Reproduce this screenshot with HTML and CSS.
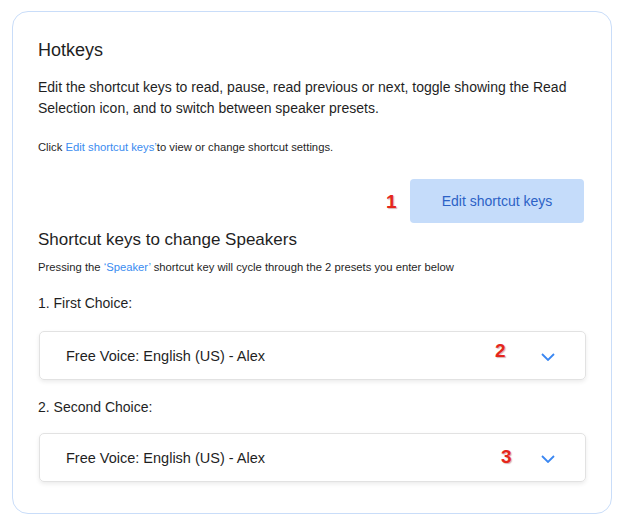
FILE: index.html
```html
<!DOCTYPE html>
<html lang="en">
<head>
<meta charset="UTF-8">
<title>Hotkeys</title>
<link rel="stylesheet" href="styles.css">
</head>
<body>
<div class="card">
  <!-- Hotkeys intro -->
  <h2 class="card-title">Hotkeys</h2>
  <p class="intro">Edit the shortcut keys to read, pause, read previous or next, toggle showing the Read Selection icon, and to switch between speaker presets.</p>
  <p class="note">Click <a class="link" href="#">Edit shortcut keys’</a>to view or change shortcut settings.</p>

  <div class="button-row">
    <button class="edit-button">
      <span class="marker marker-1">1</span>
      Edit shortcut keys
    </button>
  </div>

  <!-- Speaker presets -->
  <h3 class="section-title">Shortcut keys to change Speakers</h3>
  <p class="note note-tight">Pressing the <span class="link">‘Speaker’</span> shortcut key will cycle through the 2 presets you enter below</p>

  <div class="choice-label label-first">1. First Choice:</div>
  <div class="voice-select">
    <span>Free Voice: English (US) - Alex</span>
    <span class="marker marker-2">2</span>
    <svg class="chevron" width="14" height="8" viewBox="0 0 14 8"><path d="M1 1 L7 7 L13 1" fill="none" stroke="#3a87f2" stroke-width="1.8"/></svg>
  </div>

  <div class="choice-label">2. Second Choice:</div>
  <div class="voice-select select-last">
    <span>Free Voice: English (US) - Alex</span>
    <span class="marker marker-3">3</span>
    <svg class="chevron" width="14" height="8" viewBox="0 0 14 8"><path d="M1 1 L7 7 L13 1" fill="none" stroke="#3a87f2" stroke-width="1.8"/></svg>
  </div>
</div>
</body>
</html>
```

FILE: styles.css
```css
body {
    font-family: 'Liberation Sans', Arial, sans-serif;
    margin: 0;
    padding: 11px 12px;
    background-color: #ffffff;
    color: #1f1f1f;
}

.card {
    padding: 27px 25px 31px 25px;
    border: 1px solid #c9ddf9;
    border-radius: 16px;
    background-color: #ffffff;
}

.card-title {
    margin: 0;
    font-size: 18px;
    font-weight: 400;
    line-height: 22px;
}

.intro {
    margin: 16px 0 0 0;
    font-size: 14px;
    line-height: 21px;
}

.note {
    margin: 20px 0 0 0;
    font-size: 11.25px;
    line-height: 16px;
}

.note-tight {
    margin-top: 9px;
}

.link {
    color: #3a8cf0;
    text-decoration: none;
}

/* Edit button */
.button-row {
    display: flex;
    justify-content: flex-end;
    margin-top: 24px;
    padding-right: 2px;
}

.edit-button {
    position: relative;
    width: 174px;
    height: 44px;
    border: none;
    border-radius: 4px;
    background-color: #c5dcfa;
    color: #2c62c6;
    font-family: 'Liberation Sans', Arial, sans-serif;
    font-size: 14px;
    cursor: pointer;
}

.section-title {
    margin: 7px 0 0 0;
    font-size: 17px;
    font-weight: 400;
    line-height: 20px;
}

.choice-label {
    margin-top: 17px;
    font-size: 14px;
    line-height: 20px;
}

.label-first {
    margin-top: 18px;
}

/* Voice dropdowns */
.voice-select {
    position: relative;
    display: flex;
    align-items: center;
    justify-content: space-between;
    height: 47px;
    margin: 18px 0 0 1px;
    padding: 0 30px 0 26px;
    border: 1px solid #e2e2e2;
    border-radius: 5px;
    box-shadow: 0 2px 4px rgba(0, 0, 0, 0.08);
    font-size: 14.5px;
}

.select-last {
    margin-top: 16px;
}

.chevron {
    margin-top: 2px;
}

/* Red annotation numbers */
.marker {
    position: absolute;
    color: #e5261b;
    font-family: 'Liberation Sans', Arial, sans-serif;
    font-size: 19px;
    font-weight: 700;
    line-height: 1;
    text-shadow: 1px 1px 1px rgba(120, 0, 0, 0.3);
}

.marker-1 {
    left: -24px;
    top: 13px;
}

.marker-2 {
    left: 455px;
    top: 9px;
}

.marker-3 {
    left: 461px;
    top: 13px;
}
```
